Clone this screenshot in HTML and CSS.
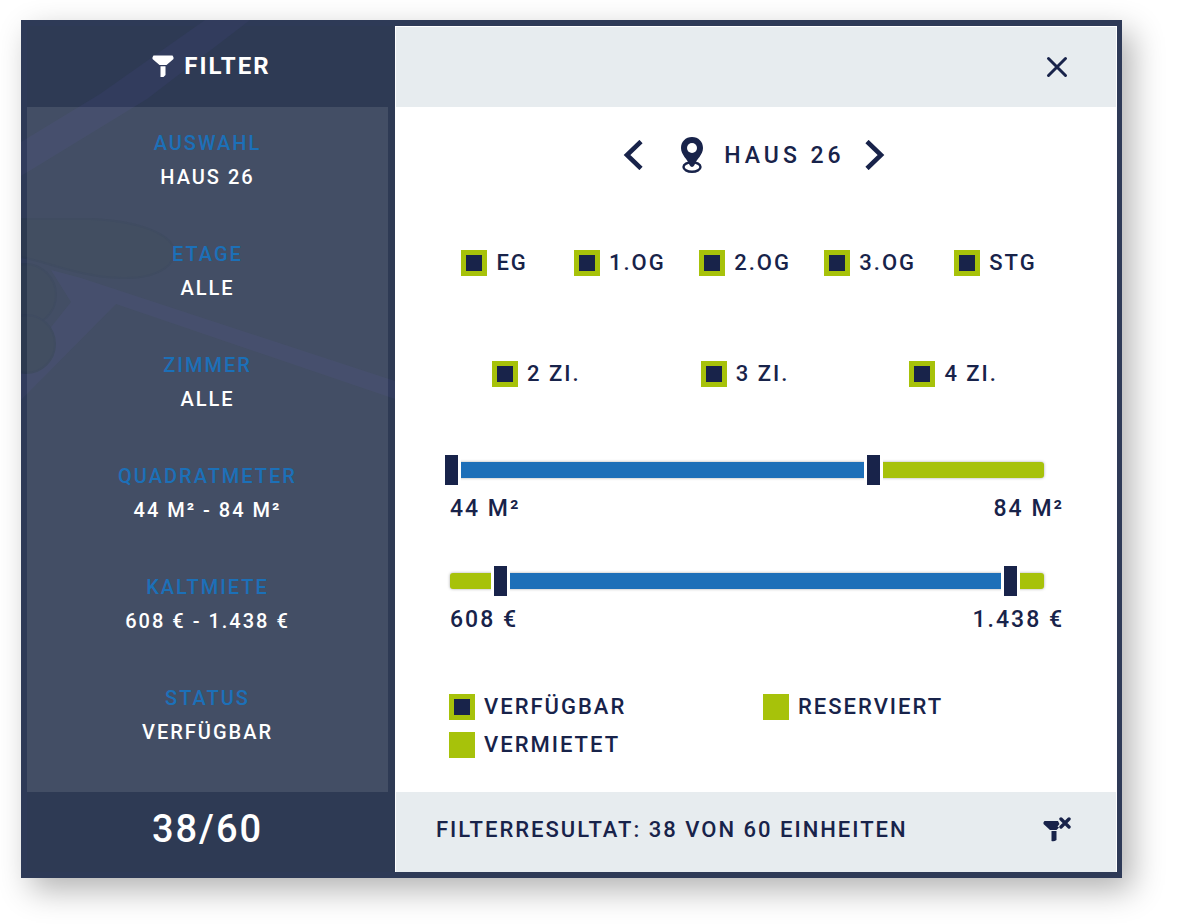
FILE: index.html
```html
<!DOCTYPE html>
<html lang="de">
<head>
  <meta charset="UTF-8" />
  <meta name="viewport" content="width=device-width, initial-scale=1" />
  <title>Filter</title>
  <link rel="stylesheet" href="styles.css">
</head>
<body>
  <div class="dialog">
    <aside class="sidebar">
      <svg class="sidebar-art" viewBox="0 0 374 858" preserveAspectRatio="xMidYMid slice" aria-hidden="true">
        <g fill="#323c5d">
          <path d="M184 0H229L126 79L0 156V122L79 74Z" />
          <path d="M30 250L60 258L374 361V379L95 284L0 380V345L50 282Z" />
        </g>
        <g fill="#2d3a50" stroke="#2b3850" stroke-width="2">
          <path d="M0 199H70C120 201 153 215 153 232C153 250 128 259 100 258C60 257 30 243 0 237Z" />
          <circle cx="4" cy="275" r="31" />
          <circle cx="5" cy="324" r="29" />
        </g>
      </svg>
      <h2 class="sidebar-header">
        <svg width="22" height="22" viewBox="0 0 22 22" fill="currentColor" aria-hidden="true">
          <path d="M1.5 0.5H20.5Q22 2 21.5 4L14.5 10H7.5L0.5 4Q0 2 1.5 0.5ZM8.5 11.2H13.5V20L11.5 22H8.5Z" />
        </svg>
        FILTER
      </h2>
      <dl class="summary">
        <div class="summary-item"><dt>AUSWAHL</dt><dd>HAUS 26</dd></div>
        <div class="summary-item"><dt>ETAGE</dt><dd>ALLE</dd></div>
        <div class="summary-item"><dt>ZIMMER</dt><dd>ALLE</dd></div>
        <div class="summary-item"><dt>QUADRATMETER</dt><dd>44 M² - 84 M²</dd></div>
        <div class="summary-item"><dt>KALTMIETE</dt><dd>608 € - 1.438 €</dd></div>
        <div class="summary-item"><dt>STATUS</dt><dd>VERFÜGBAR</dd></div>
      </dl>
      <div class="count">38/60</div>
    </aside>

    <main class="main">
      <header class="bar bar-top">
        <button type="button" class="icon-button" aria-label="Schließen">
          <svg width="22" height="22" viewBox="0 0 22 22" fill="none" stroke="currentColor" stroke-width="3" stroke-linecap="round">
            <path d="M2.5 2.5L19.5 19.5M19.5 2.5L2.5 19.5" />
          </svg>
        </button>
      </header>

      <form class="content">
        <div class="house">
          <button type="button" class="icon-button" aria-label="Vorheriges Haus">
            <svg width="20" height="30" viewBox="0 0 20 30" fill="none" stroke="currentColor" stroke-width="4.6">
              <path d="M18 1.5L4 15L18 28.5" />
            </svg>
          </button>
          <div class="house-name">
            <svg width="24" height="36" viewBox="0 0 24 36" aria-hidden="true">
              <ellipse cx="12" cy="30" rx="8.5" ry="4.8" fill="none" stroke="currentColor" stroke-width="2.4" />
              <path d="M12 0C18.5 0 23 4.7 23 11C23 18 16.5 22 14.5 28Q12 32 9.5 28C7.5 22 1 18 1 11C1 4.7 5.5 0 12 0Z" fill="currentColor" />
              <circle cx="12" cy="11" r="5" fill="#fff" />
            </svg>
            <span>HAUS 26</span>
          </div>
          <button type="button" class="icon-button" aria-label="Nächstes Haus">
            <svg width="20" height="30" viewBox="0 0 20 30" fill="none" stroke="currentColor" stroke-width="4.6">
              <path d="M2 1.5L16 15L2 28.5" />
            </svg>
          </button>
        </div>

        <div class="options">
          <label class="check"><input type="checkbox" checked>EG</label>
          <label class="check"><input type="checkbox" checked>1.OG</label>
          <label class="check"><input type="checkbox" checked>2.OG</label>
          <label class="check"><input type="checkbox" checked>3.OG</label>
          <label class="check"><input type="checkbox" checked>STG</label>
        </div>

        <div class="options">
          <label class="check"><input type="checkbox" checked>2 ZI.</label>
          <label class="check"><input type="checkbox" checked>3 ZI.</label>
          <label class="check"><input type="checkbox" checked>4 ZI.</label>
        </div>

        <div class="range">
          <div class="slider">
            <div class="track"><div class="fill" style="margin-left: 0%; width: 71.4%"></div></div>
            <input type="range" min="44" max="100" value="44" aria-label="Quadratmeter von">
            <input type="range" min="44" max="100" value="84" aria-label="Quadratmeter bis">
          </div>
          <div class="range-values"><span>44 M²</span><span>84 M²</span></div>
        </div>

        <div class="range">
          <div class="slider">
            <div class="track"><div class="fill" style="margin-left: 8.3%; width: 86.3%"></div></div>
            <input type="range" min="528" max="1490" value="608" aria-label="Kaltmiete von">
            <input type="range" min="528" max="1490" value="1438" aria-label="Kaltmiete bis">
          </div>
          <div class="range-values"><span>608 €</span><span>1.438 €</span></div>
        </div>

        <div class="status">
          <label class="check"><input type="checkbox" checked>VERFÜGBAR</label>
          <label class="check"><input type="checkbox">RESERVIERT</label>
          <label class="check"><input type="checkbox">VERMIETET</label>
        </div>
      </form>

      <footer class="bar bar-bottom">
        <span>FILTERRESULTAT: 38 VON 60 EINHEITEN</span>
        <button type="button" class="icon-button" aria-label="Filter zurücksetzen">
          <svg width="28" height="26" viewBox="0 0 28 26" aria-hidden="true">
            <path d="M1.5 5H15L16.500 8L14.500 10.500L16 11.500L13.500 14H7L0.500 8Q0 6 1.500 5ZM8.500 15H13.500V24Q11 26 8.500 25Z" fill="currentColor" />
            <path d="M18 3L26 11M26 3L18 11" fill="none" stroke="currentColor" stroke-width="3.4" stroke-linecap="round" />
          </svg>
        </button>
      </footer>
    </main>
  </div>
</body>
</html>
```
FILE: styles.css
```css
* {
  box-sizing: border-box;
}
body {
  margin: 0;
  padding: 20px 78px 46px 21px;
  background: #ffffff;
  font-family: Roboto, Arial, sans-serif;
  font-size: 22px;
  font-weight: 500;
  letter-spacing: 2px;
  color: #18234a;
}
.dialog {
  display: flex;
  position: relative;
  border: 6px solid #2e3a57;
  border-right-width: 5px;
  background: #2e3a54;
  box-shadow: 10px 12px 30px rgba(0, 0, 0, 0.3);
}

/* Left column */
.sidebar {
  flex: 0 0 368px;
  display: flex;
  flex-direction: column;
  padding-right: 7px;
  color: #ffffff;
  text-align: center;
}
.sidebar-art {
  position: absolute;
  top: -6px;
  left: -6px;
  width: 374px;
  height: calc(100% + 12px);
}
.sidebar-header {
  position: relative;
  display: flex;
  align-items: center;
  justify-content: center;
  gap: 10px;
  height: 81px;
  margin: 0;
  padding: 0 0 2px 8px;
  font-size: 24px;
  font-weight: 700;
}
.summary {
  position: relative;
  margin: 0;
  padding-top: 19px;
  background: rgba(255, 255, 255, 0.1);
  font-size: 20px;
  line-height: 34px;
}
.summary-item {
  padding-bottom: 43px;
}
.summary dt {
  color: #1c70b8;
}
.summary dd {
  margin: 0;
}
.count {
  position: relative;
  height: 80px;
  font-size: 38px;
  line-height: 74px;
}

/* Right column */
.main {
  flex: 1;
  min-width: 0;
  background: #ffffff;
  border: 1px solid #ffffff;
  border-width: 0 1px;
}
.bar {
  display: flex;
  align-items: center;
  justify-content: space-between;
  height: 80px;
  padding: 0 45px 0 40px;
  background: #e7ecef;
}
.bar-top {
  height: 81px;
  justify-content: flex-end;
  padding-right: 48px;
  border-top: 1px solid #ffffff;
}
.bar-bottom {
  padding-bottom: 6px;
}
.icon-button {
  display: flex;
  padding: 0;
  border: none;
  background: none;
  color: inherit;
  cursor: pointer;
}
.content {
  padding: 0 58px 0 34px;
}
.house {
  display: flex;
  align-items: center;
  justify-content: center;
  gap: 20px;
  height: 100px;
  padding-bottom: 4px;
  padding-left: 20px;
}
.house-name {
  display: flex;
  align-items: center;
  gap: 20px;
  padding-left: 17px;
  font-size: 23px;
  letter-spacing: 4px;
}
.options {
  display: flex;
  align-items: center;
  height: 111px;
  padding-left: 2px;
}
.options .check {
  flex: 1;
  justify-content: center;
}
.check {
  display: flex;
  align-items: center;
  gap: 9px;
  line-height: 26px;
  cursor: pointer;
}
.check input {
  appearance: none;
  width: 26px;
  height: 26px;
  margin: 0;
  border: 5px solid #a7c20a;
  background: #a7c20a;
  cursor: pointer;
}
.check input:checked {
  background: #18234a;
}

/* Range with two handles */
.range {
  height: 111px;
  padding: 26px 0 0 20px;
}
.slider {
  position: relative;
  display: flex;
  align-items: center;
  height: 30px;
  margin-right: 14px;
}
.track {
  flex: 1;
  height: 16px;
  border-radius: 3px;
  background: #a7c20a;
  box-shadow: 0 0 3px rgba(0, 0, 0, 0.35);
  overflow: hidden;
}
.fill {
  height: 100%;
  background: #1d6fb8;
}
.slider input {
  appearance: none;
  position: absolute;
  top: 0;
  left: -8px;
  width: calc(100% + 16px);
  height: 30px;
  margin: 0;
  background: none;
  pointer-events: none;
}
.slider input::-webkit-slider-thumb {
  appearance: none;
  width: 19px;
  height: 30px;
  border: 3px solid #ffffff;
  border-width: 0 3px;
  background: #18234a;
  pointer-events: auto;
  cursor: pointer;
}
.range-values {
  display: flex;
  justify-content: space-between;
  margin-right: -6px;
  padding-top: 7px;
  font-size: 23px;
  line-height: 34px;
}
.status {
  display: grid;
  grid-template-columns: 1fr 1fr;
  row-gap: 12px;
  padding: 43px 0 34px;
}
.status .check {
  padding-left: 19px;
}
```
